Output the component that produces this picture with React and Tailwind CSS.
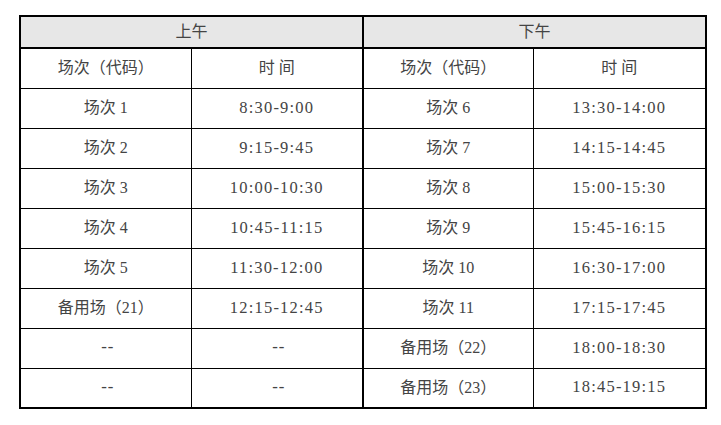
const morning = [
  ['场次 1', '8:30-9:00'],
  ['场次 2', '9:15-9:45'],
  ['场次 3', '10:00-10:30'],
  ['场次 4', '10:45-11:15'],
  ['场次 5', '11:30-12:00'],
  ['备用场（21）', '12:15-12:45'],
  ['--', '--'],
  ['--', '--'],
];

const afternoon = [
  ['场次 6', '13:30-14:00'],
  ['场次 7', '14:15-14:45'],
  ['场次 8', '15:00-15:30'],
  ['场次 9', '15:45-16:15'],
  ['场次 10', '16:30-17:00'],
  ['场次 11', '17:15-17:45'],
  ['备用场（22）', '18:00-18:30'],
  ['备用场（23）', '18:45-19:15'],
];

const cjk = "font-['Liberation_Serif','Noto_Sans_CJK_SC',serif] text-[16px]";
const time = "font-['Liberation_Serif','Noto_Sans_CJK_SC',serif] text-[16.5px] tracking-[1.2px]";
const dash = "font-['Liberation_Mono',monospace] text-[16px] tracking-[-3px]";

const cellFont = (v, base) => (v === '--' ? dash : base);

export default function App() {
  return (
    <div className="w-[721px] h-[425px] bg-white pt-[15px] pl-[19px]">
      <table className="border-collapse table-fixed w-[686px] border-2 border-black text-[#444] text-center">
        <colgroup>
          <col className="w-[171px]" />
          <col className="w-[172px]" />
          <col className="w-[170px]" />
          <col className="w-[173px]" />
        </colgroup>
        <thead>
          <tr className="h-[32px] bg-[#e7e7e7]">
            <th colSpan={2} className={`border-2 border-black font-normal ${cjk}`}>上午</th>
            <th colSpan={2} className={`border-2 border-black font-normal ${cjk}`}>下午</th>
          </tr>
        </thead>
        <tbody>
          <tr className="h-[40px]">
            <td className={`border border-black ${cjk}`}>场次（代码）</td>
            <td className={`border border-black border-r-2 ${cjk}`}>时 间</td>
            <td className={`border border-black ${cjk}`}>场次（代码）</td>
            <td className={`border border-black ${cjk}`}>时 间</td>
          </tr>
          {morning.map((m, i) => (
            <tr key={i} className="h-[40px]">
              <td className={`border border-black ${cellFont(m[0], cjk)}`}>{m[0]}</td>
              <td className={`border border-black border-r-2 ${cellFont(m[1], time)}`}>{m[1]}</td>
              <td className={`border border-black ${cjk}`}>{afternoon[i][0]}</td>
              <td className={`border border-black ${time}`}>{afternoon[i][1]}</td>
            </tr>
          ))}
        </tbody>
      </table>
    </div>
  );
}
